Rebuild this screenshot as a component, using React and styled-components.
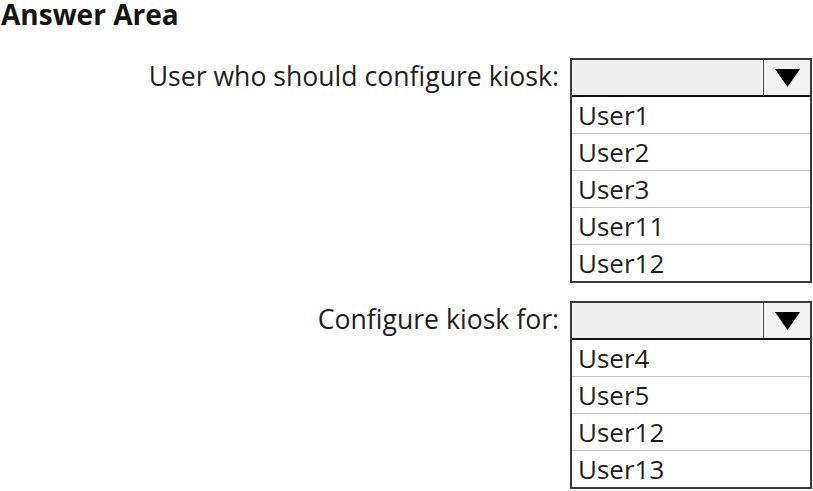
import React from "react";
import styled, { createGlobalStyle } from "styled-components";

const Global = createGlobalStyle`
  html, body { margin: 0; padding: 0; background: #ffffff; }
  body { font-family: "Open Sans", "DejaVu Sans", sans-serif; color: #1c1c1c; }
`;

const Page = styled.div`
  width: 813px;
  height: 491px;
  display: flex;
  flex-direction: column;
  box-sizing: border-box;
`;

const Title = styled.h1`
  margin: 0 0 29px 0;
  padding-left: 1px;
  font-size: 28px;
  font-weight: 700;
  line-height: 29px;
  color: #141414;
`;

const Question = styled.div`
  display: flex;
  justify-content: flex-end;
  align-items: flex-start;
  gap: 11px;
  padding-right: 1px;
  margin-bottom: ${(p) => p.$gap || 0}px;
`;

const Label = styled.div`
  font-size: 26.6px;
  line-height: 36px;
  color: #1e1e1e;
  white-space: nowrap;
`;

const Dropdown = styled.div`
  width: 242px;
  box-sizing: border-box;
  border: 2px solid #3a3a3a;
  display: flex;
  flex-direction: column;
  background: #fff;
`;

const Header = styled.div`
  height: 35px;
  display: flex;
  border-bottom: 2px solid #111;
  background: #efefef;
`;

const Field = styled.div`
  flex: 1;
`;

const Button = styled.div`
  width: 46px;
  border-left: 1px solid #4a4a4a;
  display: flex;
  align-items: center;
  justify-content: center;
  background: #f2f2f2;
`;

const Item = styled.div`
  height: 36px;
  padding-left: 6px;
  font-size: 26px;
  line-height: 36px;
  color: #1e1e1e;
  border-top: ${(p) => (p.$first ? "none" : "1px solid #c4c4c4")};
`;

const Arrow = () => (
  <svg width="25" height="18" viewBox="0 0 25 18">
    <polygon points="0,0 25,0 12.5,18" fill="#000" />
  </svg>
);

const Select = ({ options }) => (
  <Dropdown>
    <Header>
      <Field />
      <Button>
        <Arrow />
      </Button>
    </Header>
    {options.map((o, i) => (
      <Item key={o} $first={i === 0}>
        {o}
      </Item>
    ))}
  </Dropdown>
);

export default function App() {
  return (
    <Page>
      <Global />
      <Title>Answer Area</Title>
      <Question $gap={18}>
        <Label>User who should configure kiosk:</Label>
        <Select options={["User1", "User2", "User3", "User11", "User12"]} />
      </Question>
      <Question>
        <Label>Configure kiosk for:</Label>
        <Select options={["User4", "User5", "User12", "User13"]} />
      </Question>
    </Page>
  );
}
